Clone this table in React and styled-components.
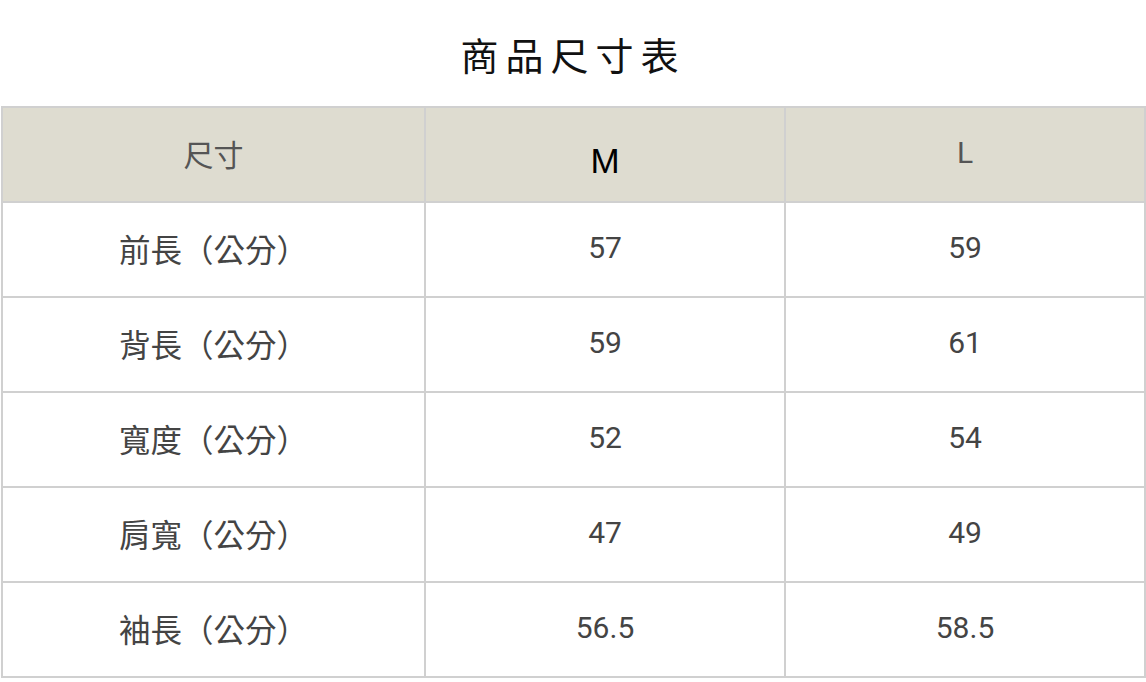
import styled, { createGlobalStyle } from 'styled-components';

const GlobalStyle = createGlobalStyle`
  body {
    margin: 0;
    background: #fff;
    font-family: Roboto, "Noto Sans CJK TC", sans-serif;
  }
`;

const Page = styled.section`
  padding: 0 1px;
`;

const Title = styled.h1`
  margin: 0;
  padding: 35px 0 33px;
  height: 38px;
  line-height: 38px;
  text-align: center;
  font-family: "Noto Sans CJK TC", sans-serif;
  font-size: 38px;
  font-weight: 400;
  letter-spacing: 7px;
  color: #111;
`;

const Table = styled.table`
  width: 100%;
  border-collapse: collapse;
  table-layout: fixed;
`;

const HeadCell = styled.th`
  height: 89px;
  padding: 0 0 4px;
  border: 2px solid #d0d0d0;
  background: #dedcd0;
  font-family: Roboto, "Noto Sans CJK TC", sans-serif;
  font-size: 30px;
  font-weight: 400;
  color: #555;
  text-align: center;
  vertical-align: middle;
`;

const SizeLabel = styled.span`
  position: relative;
  top: 8px;
  font-family: "Liberation Sans", Arial, sans-serif;
  font-size: 35px;
  color: #000;
`;

const Cell = styled.td`
  height: 89px;
  padding: 0 0 4px;
  border: 2px solid #d0d0d0;
  font-family: Roboto, "Noto Sans CJK TC", sans-serif;
  font-size: ${(p) => (p.$label ? '31.5px' : '30px')};
  color: #444;
  text-align: center;
  vertical-align: middle;
`;

const rows = [
  ['前長（公分）', '57', '59'],
  ['背長（公分）', '59', '61'],
  ['寬度（公分）', '52', '54'],
  ['肩寬（公分）', '47', '49'],
  ['袖長（公分）', '56.5', '58.5'],
];

function App() {
  return (
    <Page>
      <GlobalStyle />
      <Title>商品尺寸表</Title>
      <Table>
        <colgroup>
          <col style={{ width: '423px' }} />
          <col style={{ width: '360px' }} />
          <col style={{ width: '360px' }} />
        </colgroup>
        <thead>
          <tr>
            <HeadCell>尺寸</HeadCell>
            <HeadCell>
              <SizeLabel>M</SizeLabel>
            </HeadCell>
            <HeadCell>L</HeadCell>
          </tr>
        </thead>
        <tbody>
          {rows.map((r) => (
            <tr key={r[0]}>
              {r.map((v, i) => (
                <Cell key={i} $label={i === 0}>
                  {v}
                </Cell>
              ))}
            </tr>
          ))}
        </tbody>
      </Table>
    </Page>
  );
}

export default App;
